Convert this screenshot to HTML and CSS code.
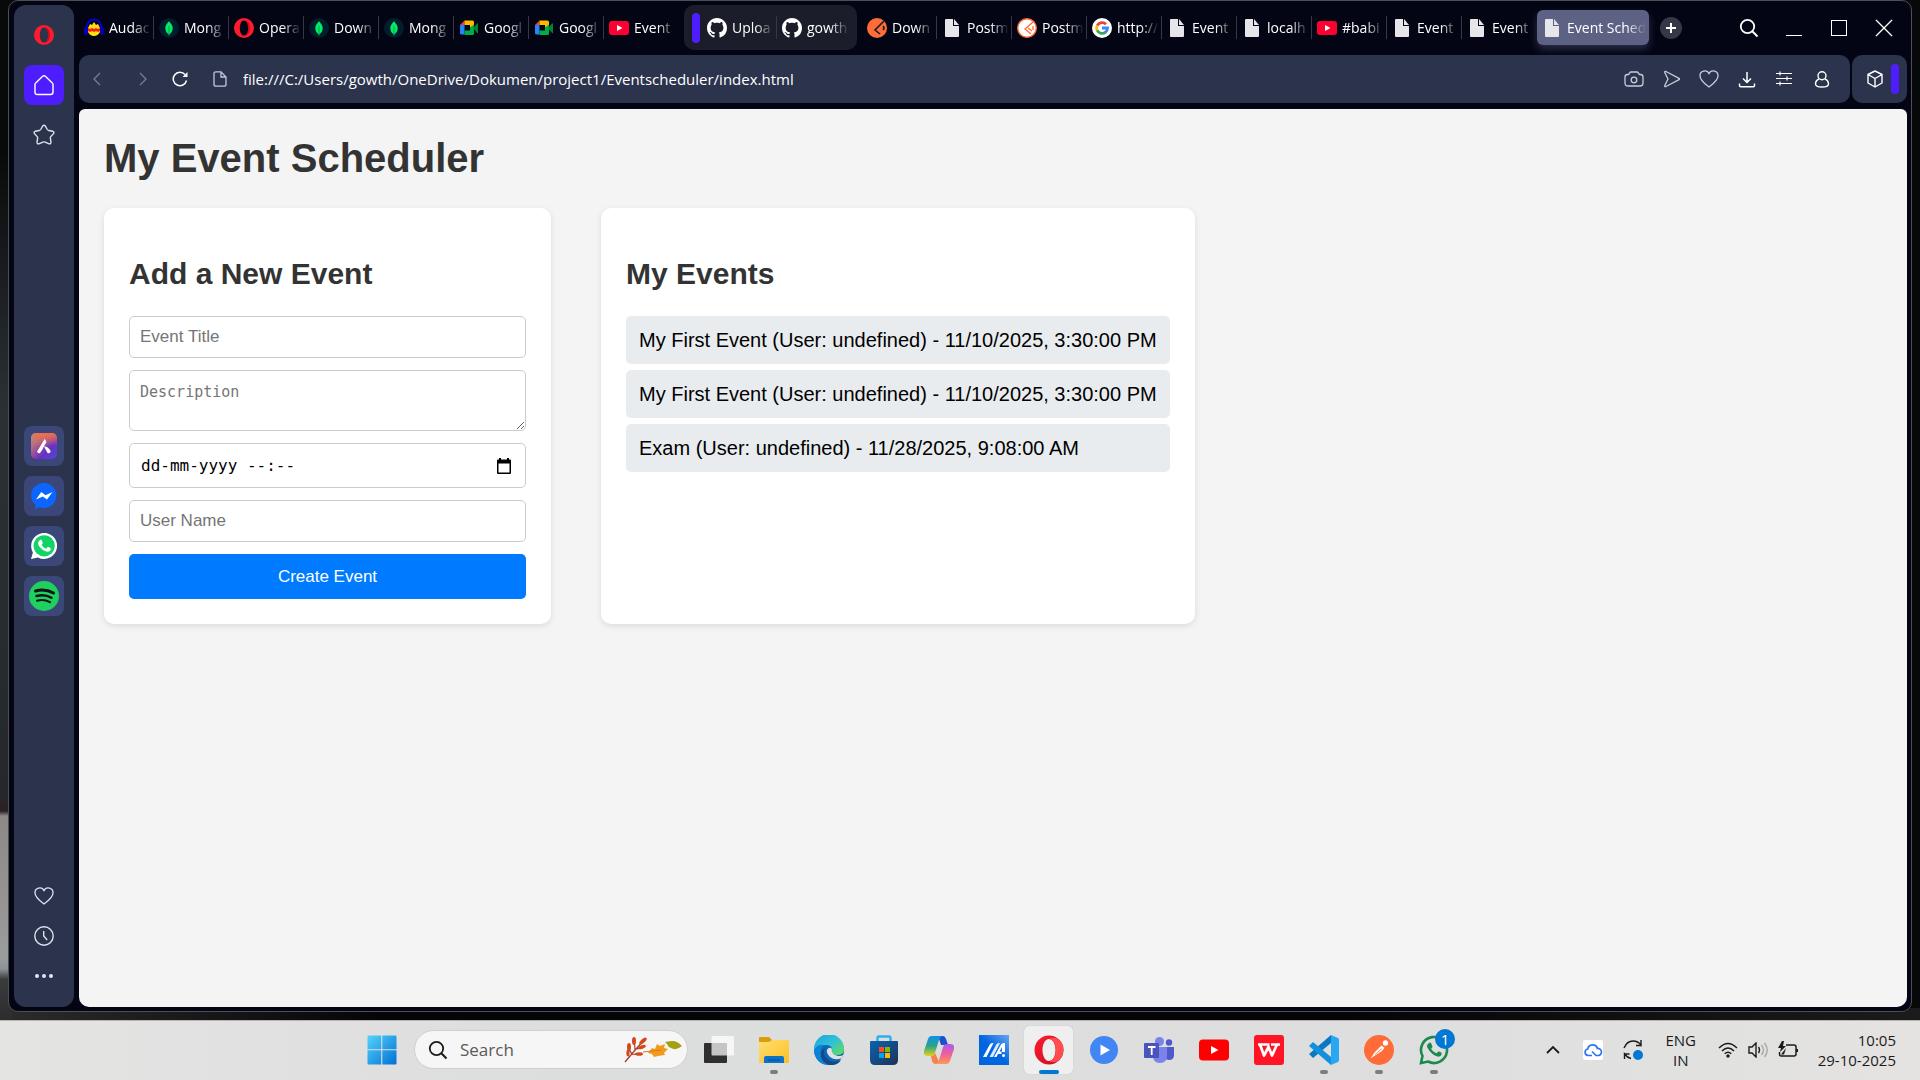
FILE: index.html
```html
<!DOCTYPE html>
<html lang="en">
<head>
<meta charset="utf-8">
<meta name="viewport" content="width=device-width, initial-scale=1">
<title>Event Scheduler</title>
<link rel="stylesheet" href="styles.css">
</head>
<body>
<svg class="defs" aria-hidden="true">
  <defs>
    <linearGradient id="gWin" x1="0" y1="0" x2="1" y2="1"><stop offset="0" stop-color="#55d3fb"/><stop offset="1" stop-color="#0070d4"/></linearGradient>
    <linearGradient id="gFolder" x1="0" y1="0" x2="1" y2="1"><stop offset="0" stop-color="#ffdf74"/><stop offset="1" stop-color="#fcbf22"/></linearGradient>
    <linearGradient id="gEdge" x1="0" y1="0" x2="1" y2="1"><stop offset="0" stop-color="#1d9fe0"/><stop offset=".5" stop-color="#2fc2d6"/><stop offset="1" stop-color="#6be04a"/></linearGradient>
    <linearGradient id="gStore" x1="0" y1="0" x2="1" y2="1"><stop offset="0" stop-color="#0a63b0"/><stop offset="1" stop-color="#1e3258"/></linearGradient>
    <linearGradient id="gCopA" x1="0" y1="0" x2="0" y2="1"><stop offset="0" stop-color="#1690e8"/><stop offset=".5" stop-color="#26a38c"/><stop offset="1" stop-color="#e8d018"/></linearGradient>
    <linearGradient id="gCopB" x1="0" y1="0" x2="0" y2="1"><stop offset="0" stop-color="#a55bf0"/><stop offset=".5" stop-color="#f0609a"/><stop offset="1" stop-color="#ff9a50"/></linearGradient>
    <linearGradient id="gAsus" x1="0" y1="1" x2="1" y2="0"><stop offset=".5" stop-color="#0066e0"/><stop offset="1" stop-color="#66a6f2"/></linearGradient>
    <linearGradient id="gOpera" x1="0" y1="0" x2="1" y2="1"><stop offset="0" stop-color="#ff1b2d"/><stop offset="1" stop-color="#c3101f"/></linearGradient>
    <linearGradient id="gAria" x1="0" y1="0" x2="1" y2="1"><stop offset="0" stop-color="#55b8dc"/><stop offset=".3" stop-color="#b5687f"/><stop offset=".65" stop-color="#6a2fc4"/><stop offset="1" stop-color="#4c49d6"/></linearGradient>
    <linearGradient id="gAriaTop" x1="0" y1="0" x2="0" y2="1"><stop offset="0" stop-color="#f07048"/><stop offset=".5" stop-color="#f07048" stop-opacity="0"/></linearGradient>
    <symbol id="opera" viewBox="0 0 20 20"><path fill-rule="evenodd" fill="#ff1b2d" d="M10 0a10 10 0 1 0 0 20a10 10 0 1 0 0-20zM10 2.400c-2.600 0-4.200 3.500-4.200 7.600s1.600 7.600 4.200 7.600s4.200-3.500 4.200-7.600s-1.600-7.600-4.200-7.600z"/><path fill="#a70014" opacity=".6" d="M10 2.400c2 0 6 1 6 7.600s-4 7.600-6 7.600c6-1.600 5.600-13.600 0-15.200z"/></symbol>
    <symbol id="mongo" viewBox="0 0 20 20"><circle cx="10" cy="10" r="10" fill="#001e2b"/><path fill="#00ed64" d="M10 3c1 2 3.700 3.800 3.700 7.300c0 3-1.600 4.800-3.300 5.900v1.300h-.8v-1.300c-1.700-1.100-3.300-2.900-3.300-5.900C6.300 6.800 9 5 10 3z"/><path d="M10 8v8" stroke="#00a54a"/></symbol>
    <symbol id="meet" viewBox="0 0 20 20"><path fill="#2684fc" d="M1 7h4.500v9.500H2.500A1.500 1.500 0 0 1 1 15z"/><path fill="#ea4335" d="M1 7l4.500-4.500V7z"/><path fill="#ffba00" d="M5.500 2.500h8A1.500 1.500 0 0 1 15 4v4l-4 2V7H5.500z"/><path fill="#00ac47" d="M5.500 17v-4.500H11V9.500l4-3v9a1.500 1.500 0 0 1-1.500 1.500z"/><path fill="#00832d" d="M14 10l4-4.500q1-.7 1 .5v8.500q0 1.200-1 .5z"/></symbol>
    <symbol id="youtube" viewBox="0 0 20 20"><rect y="3" width="20" height="14" rx="3" fill="#ff0033"/><path d="M8 7l5.500 3L8 13z" fill="#fff"/></symbol>
    <symbol id="github" viewBox="0 0 16 16"><path fill="#fff" d="M8 0C3.580 0 0 3.580 0 8c0 3.540 2.290 6.530 5.470 7.590.4.070.55-.17.55-.38 0-.19-.01-.82-.01-1.490-2.010.37-2.530-.49-2.690-.94-.09-.23-.48-.94-.82-1.130-.28-.15-.68-.52-.01-.53.630-.01 1.080.58 1.230.82.720 1.210 1.870.87 2.330.66.070-.52.280-.87.510-1.070-1.780-.2-3.640-.89-3.640-3.950 0-.87.310-1.590.820-2.150-.08-.2-.36-1.020.08-2.120 0 0 .67-.21 2.200.82.640-.18 1.320-.27 2-.27s1.360.09 2 .27c1.530-1.040 2.200-.82 2.200-.82.440 1.100.160 1.920.080 2.120.510.560.820 1.270.820 2.150 0 3.070-1.870 3.750-3.650 3.950.290.250.540.730.540 1.480 0 1.070-.01 1.930-.01 2.200 0 .210.150.460.550.380A8.010 8.010 0 0 0 16 8c0-4.420-3.580-8-8-8z"/></symbol>
    <symbol id="page" viewBox="0 0 20 20"><path fill="#e6e6ea" d="M4 1h7v7h6v10a1 1 0 0 1-1 1H4a1 1 0 0 1-1-1V2a1 1 0 0 1 1-1z"/><path fill="#e6e6ea" d="M12 1l5 6h-5z"/></symbol>
    <symbol id="heart" viewBox="0 0 20 20"><path fill="none" stroke="currentColor" stroke-width="1.300" stroke-linejoin="round" d="M10 18C6 15 1 11.500 1 7a4.700 4.700 0 0 1 9-2.200A4.700 4.700 0 0 1 19 7c0 4.500-5 8-9 11z"/></symbol>
    <symbol id="glass" viewBox="0 0 20 20"><circle cx="8.500" cy="8.500" r="6.700" fill="none" stroke="currentColor" stroke-width="1.800"/><path d="M13.300 13.300L18.500 18.500" stroke="currentColor" stroke-width="2"/></symbol>
  </defs>
</svg>

<div class="desktop">
  <div class="window">
    <aside class="sidebar">
      <div class="side-group">
        <button class="side-btn" aria-label="Opera menu"><svg width="20" height="20"><use href="#opera"/></svg></button>
        <button class="side-btn side-home" aria-label="Home"><svg width="22" height="22" viewBox="0 0 22 22"><path fill="none" stroke="#fff" stroke-width="1.400" stroke-linejoin="round" d="M2 10.500Q2 9.500 3 8.700L9.600 2.300Q11 1 12.400 2.300L19 8.700Q20 9.500 20 10.500V18q0 2.500-2.500 2.500h-13Q2 20.500 2 18z"/></svg></button>
        <button class="side-btn" aria-label="Pinboards"><svg width="22" height="22" viewBox="0 0 22 22"><path fill="none" stroke="currentColor" stroke-width="1.400" stroke-linejoin="round" d="M9.700 2q1.300-1.500 2.600 0l2 3.500q.5.800 1.500 1l4 .8q1.800.7.700 2.300l-2.700 3q-.6.800-.4 1.700l.6 4q-.1 1.900-1.900 1.500l-4-1.700q-1.100-.4-2.200 0l-4 1.700Q4.100 20.200 4 18.300l.6-4q.2-.9-.4-1.700l-2.700-3Q.4 8 2.200 7.300l4-.8q1-.2 1.500-1z"/></svg></button>
      </div>
      <div class="side-group side-apps">
        <button class="side-btn side-app" aria-label="Aria"><svg width="26" height="26" viewBox="0 0 26 26"><rect width="26" height="26" rx="5" fill="url(#gAria)"/><rect width="26" height="26" rx="5" fill="url(#gAriaTop)"/><path d="M13.800 6L12.600 13Q11.500 17 9 19.500Q7.500 21 6.300 18.500Z" fill="#fff"/><path d="M13.800 6L6.300 18.500Q7 21 9 20L15.500 9Z" fill="#fff"/><path d="M13 13.500q4-.5 6.800 5q-1 2.500-3.300 1.500Z" fill="#fff"/></svg></button>
        <button class="side-btn side-app" aria-label="Messenger"><svg width="26" height="26" viewBox="0 0 26 26"><path fill="#0a66ff" d="M13 0a12.500 12.500 0 1 1-4.500 24.200L4.500 26V22A12.500 12.500 0 0 1 13 0z"/><path fill="#fff" d="M5 16.500L10.300 9l4.200 3.200L21.500 9 16 16.500l-4.200-3z"/></svg></button>
        <button class="side-btn side-app" aria-label="WhatsApp"><svg width="26" height="26" viewBox="0 0 26 26"><path fill="#fff" d="M0 26l1.900-6.500A13 13 0 1 1 7 24.400z"/><circle cx="13.200" cy="12.800" r="10.600" fill="#12d366"/><path fill="#fff" d="M9 7q1-1 1.700.2l1.100 2.500q.1.600-1.200 2q1.500 2.800 4.300 4 .500.200 1.800-1.600.500-.4 3 1.100.500 3-2.700 3.500C12.500 18.500 7.500 14 7 10.500Q7 8.300 9 7z"/></svg></button>
        <button class="side-btn side-app" aria-label="Spotify"><svg width="30" height="30" viewBox="0 0 30 30"><circle cx="15" cy="15" r="15" fill="#1fcf60"/><g fill="none" stroke="#101410" stroke-linecap="round"><path d="M6.500 10q9.500-2.500 18 2" stroke-width="3"/><path d="M7.500 15q8-2.200 15 1.700" stroke-width="2.400"/><path d="M8 19.700q7-1.800 13 1.500" stroke-width="2"/></g></svg></button>
      </div>
      <div class="side-group side-tools">
        <button class="side-btn" aria-label="Favourites"><svg width="20" height="20"><use href="#heart"/></svg></button>
        <button class="side-btn" aria-label="History"><svg width="20" height="20" viewBox="0 0 20 20"><g fill="none" stroke="currentColor" stroke-width="1.400"><circle cx="10" cy="10" r="9.200"/><path d="M9.700 5v5l3.500 4"/></g></svg></button>
        <button class="side-btn" aria-label="More"><svg width="18" height="4" viewBox="0 0 18 4"><g fill="#e4e7f2"><circle cx="2" cy="2" r="2"/><circle cx="9" cy="2" r="2"/><circle cx="16" cy="2" r="2"/></g></svg></button>
      </div>
    </aside>

    <div class="browser">
      <header class="tab-bar">
        <nav class="tabs" aria-label="Tabs">
          <a class="tab" href="#"><svg class="fav" viewBox="0 0 20 20"><path fill="none" stroke="#0000d8" stroke-width="2" d="M3 12C2 5 6 1.500 10 1.500S18 5 17 12"/><rect y="9" width="4" height="8" rx="2" fill="#0000b0"/><rect x="16" y="9" width="4" height="8" rx="2" fill="#0000b0"/><path fill="#ffdd10" d="M4 10l2-4 2 1 2-3 2 3 2-1 2 4v4q-2 4-6 4t-6-4z"/><path fill="#f02010" d="M4 10l2 1 2-1 2 1 2-1 2 1 2-1v3l-2 1-2-1-2 1-2-1-2 1-2-1z"/></svg><span class="tab-label">Audac</span></a>
          <a class="tab" href="#"><svg class="fav"><use href="#mongo"/></svg><span class="tab-label">Mong</span></a>
          <a class="tab" href="#"><svg class="fav"><use href="#opera"/></svg><span class="tab-label">Opera</span></a>
          <a class="tab" href="#"><svg class="fav"><use href="#mongo"/></svg><span class="tab-label">Down</span></a>
          <a class="tab" href="#"><svg class="fav"><use href="#mongo"/></svg><span class="tab-label">Mong</span></a>
          <a class="tab" href="#"><svg class="fav"><use href="#meet"/></svg><span class="tab-label">Googl</span></a>
          <a class="tab" href="#"><svg class="fav"><use href="#meet"/></svg><span class="tab-label">Googl</span></a>
          <a class="tab tab-last" href="#"><svg class="fav"><use href="#youtube"/></svg><span class="tab-label">Event</span></a>
          <div class="tab-island">
            <span class="island-mark"></span>
            <a class="tab" href="#"><svg class="fav"><use href="#github"/></svg><span class="tab-label">Uploa</span></a>
            <a class="tab tab-last" href="#"><svg class="fav"><use href="#github"/></svg><span class="tab-label">gowth</span></a>
          </div>
          <a class="tab" href="#"><svg class="fav" viewBox="0 0 20 20"><circle cx="10" cy="10" r="10" fill="#ff6c37"/><path d="M17 3L8 12l5 4M11 9l-3 3M16 8q2 2 0 4" fill="none" stroke="#1b1b22" stroke-width="1.600"/></svg><span class="tab-label">Down</span></a>
          <a class="tab" href="#"><svg class="fav"><use href="#page"/></svg><span class="tab-label">Postm</span></a>
          <a class="tab" href="#"><svg class="fav" viewBox="0 0 20 20"><circle cx="10" cy="10" r="9.300" fill="#fff" stroke="#ff6c37" stroke-width="1.400"/><path d="M16 4L8 11l6 5M11 10l4 3M16 8v4" fill="none" stroke="#ff6c37" stroke-width="1.300"/></svg><span class="tab-label">Postm</span></a>
          <a class="tab" href="#"><svg class="fav" viewBox="0 0 20 20"><circle cx="10" cy="10" r="10" fill="#fff"/><g fill="none" stroke-width="2.800"><path stroke="#ea4335" d="M5.200 7.600A5.500 5.500 0 0 1 14 6.200"/><path stroke="#fbbc05" d="M5.200 12.600A5.500 5.500 0 0 1 5.200 7.400"/><path stroke="#34a853" d="M13.600 14.200A5.500 5.500 0 0 1 5.200 12.400"/><path stroke="#4285f4" d="M10 10h5.500Q15.500 12.700 13.500 14.300"/></g></svg><span class="tab-label">http://</span></a>
          <a class="tab" href="#"><svg class="fav"><use href="#page"/></svg><span class="tab-label">Event</span></a>
          <a class="tab" href="#"><svg class="fav"><use href="#page"/></svg><span class="tab-label">localh</span></a>
          <a class="tab" href="#"><svg class="fav"><use href="#youtube"/></svg><span class="tab-label">#babi</span></a>
          <a class="tab" href="#"><svg class="fav"><use href="#page"/></svg><span class="tab-label">Event</span></a>
          <a class="tab tab-last" href="#"><svg class="fav"><use href="#page"/></svg><span class="tab-label">Event</span></a>
          <a class="tab tab-active" href="#" aria-current="page"><svg class="fav"><use href="#page"/></svg><span class="tab-label">Event Sched</span></a>
        </nav>
        <button class="new-tab" aria-label="New tab"><svg width="10" height="10" viewBox="0 0 10 10"><path d="M5 0v10M0 5h10" stroke="#fff" stroke-width="2"/></svg></button>
        <div class="win-controls">
          <button aria-label="Search tabs"><svg width="20" height="20"><use href="#glass"/></svg></button>
          <button aria-label="Minimize"><svg width="16" height="16" viewBox="0 0 16 16"><path d="M0 15.500h16" stroke="#fff"/></svg></button>
          <button aria-label="Maximize"><svg width="16" height="16" viewBox="0 0 16 16"><rect x=".5" y=".5" width="15" height="15" fill="none" stroke="#fff"/></svg></button>
          <button aria-label="Close"><svg width="18" height="18" viewBox="0 0 18 18"><path d="M1 1l16 16M17 1L1 17" stroke="#fff" stroke-width="1.300"/></svg></button>
        </div>
      </header>

      <div class="toolbar">
        <div class="address-bar">
          <button class="nav-btn nav-off" aria-label="Back"><svg width="8" height="14" viewBox="0 0 8 14"><path d="M7 1L1 7l6 6" fill="none" stroke="currentColor" stroke-width="1.300"/></svg></button>
          <button class="nav-btn nav-off" aria-label="Forward"><svg width="8" height="14" viewBox="0 0 8 14"><path d="M1 1l6 6-6 6" fill="none" stroke="currentColor" stroke-width="1.300"/></svg></button>
          <button class="nav-reload" aria-label="Reload"><svg width="16" height="16" viewBox="0 0 16 16"><path d="M14.500 9.500A6.700 6.700 0 1 1 13 3.500" fill="none" stroke="#fff" stroke-width="1.500"/><path d="M15.500 1v5h-5z" fill="#fff"/></svg></button>
          <svg class="page-info" width="14" height="16" viewBox="0 0 14 16"><path d="M8 .8H3Q1 .8 1 2.800v10.400q0 2 2 2h8q2 0 2-2V6zM8 .8V6h5" fill="none" stroke="#c3c7d6" stroke-width="1.300"/></svg>
          <input class="url" type="text" aria-label="Address" value="file:///C:/Users/gowth/OneDrive/Dokumen/project1/Eventscheduler/index.html">
          <div class="actions">
            <button aria-label="Snapshot"><svg width="20" height="20" viewBox="0 0 20 20"><g fill="none" stroke="currentColor" stroke-width="1.300" stroke-linejoin="round"><path d="M1 8q0-2.500 2.500-2.500h1L6.500 3h7l2 2.500h1Q19 5.500 19 8v6q0 3-3 3H4q-3 0-3-3z"/><circle cx="10" cy="11" r="2.800"/></g></svg></button>
            <button aria-label="Send"><svg width="18" height="18" viewBox="0 0 18 18"><path d="M2 3q-1-2 1-1.500l13 6.800q1 .7 0 1.400L3 16.500q-2 .5-1-1.500l3-6z" fill="none" stroke="currentColor" stroke-width="1.300"/></svg></button>
            <button aria-label="Favourite"><svg width="20" height="20"><use href="#heart"/></svg></button>
            <button class="bright" aria-label="Downloads"><svg width="18" height="18" viewBox="0 0 18 18"><path d="M9 2v10M5 8.500l4 4 4-4M1.500 13.500v2q0 1.200 1.200 1.200h12.600q1.200 0 1.200-1.200v-2" fill="none" stroke="currentColor" stroke-width="1.500"/></svg></button>
            <button class="bright" aria-label="Easy setup"><svg width="16" height="16" viewBox="0 0 16 16"><path d="M0 2.500h16M0 7.500h16M0 12.500h16M4 .5v4M11 5.500v4M4 10.500v4" stroke="currentColor" stroke-width="1.200"/></svg></button>
            <button class="bright" aria-label="Profile"><svg width="16" height="18" viewBox="0 0 16 18"><g fill="none" stroke="currentColor" stroke-width="1.400"><circle cx="8" cy="5.800" r="4"/><path d="M5 9Q1.500 10.500 1.500 14q0 3 6.500 3t6.500-3Q14.500 10.500 11 9"/></g></svg></button>
          </div>
        </div>
        <div class="panel-box">
          <button aria-label="Extensions"><svg width="18" height="18" viewBox="0 0 18 18"><path d="M9 1l7 3.500v8.500L9 17l-7-4V4.500zM2 4.500L9 8.500l7-4M9 8.500V17" fill="none" stroke="#fff" stroke-width="1.400" stroke-linejoin="round"/></svg></button>
          <span class="panel-mark"></span>
        </div>
      </div>

      <main class="page">
        <h1>My Event Scheduler</h1>
        <div class="cards">
          <section class="card card-form">
            <h2>Add a New Event</h2>
            <form class="event-form">
              <input class="field" type="text" aria-label="Event Title" placeholder="Event Title">
              <textarea class="field field-area" aria-label="Description" placeholder="Description"></textarea>
              <div class="field field-date">
                <input type="text" aria-label="Date and time" placeholder="dd-mm-yyyy --:--">
                <button type="button" aria-label="Show date picker"><svg width="14" height="16" viewBox="0 0 14 16"><path fill="#000" d="M2 0h2v1.500h6V0h2v1.500h1q1 0 1 1V15q0 1-1 1H1q-1 0-1-1V2.500q0-1 1-1h1z"/><path fill="#fff" d="M1.500 5.500h11v9h-11z"/></svg></button>
              </div>
              <input class="field" type="text" aria-label="User Name" placeholder="User Name">
              <button class="submit" type="submit">Create Event</button>
            </form>
          </section>
          <section class="card">
            <h2>My Events</h2>
            <ul class="events">
              <li>My First Event (User: undefined) - 11/10/2025, 3:30:00 PM</li>
              <li>My First Event (User: undefined) - 11/10/2025, 3:30:00 PM</li>
              <li>Exam (User: undefined) - 11/28/2025, 9:08:00 AM</li>
            </ul>
          </section>
        </div>
      </main>
    </div>
  </div>
</div>

<footer class="taskbar">
  <div class="apps">
    <button class="app" aria-label="Start"><svg width="30" height="30" viewBox="0 0 30 30"><path fill="url(#gWin)" d="M1.500.500h12.700v13.700H.500V1.500q0-1 1-1zM15.300.500h13.200q1 0 1 1v12.700H15.300zM.500 15.300h13.700v14.200H1.500q-1 0-1-1zM15.300 15.300h14.200v13.200q0 1-1 1H15.300z"/></svg></button>
    <label class="search">
      <svg width="20" height="20"><use href="#glass"/></svg>
      <input type="text" placeholder="Search" aria-label="Search">
      <svg width="58" height="26" viewBox="0 0 58 26"><path d="M1 25Q10 14 21 2M8 17Q4 12 5 7M11 13q0-5-1-8M8 17q5 1 10-1M12 12q4 0 8-3" stroke="#a33a1c" stroke-width="1.200" fill="none"/><g fill="#d4481c"><ellipse cx="5" cy="10" rx="2" ry="4"/><ellipse cx="10" cy="4" rx="2" ry="4"/><ellipse cx="19" cy="4" rx="2" ry="4.500" transform="rotate(50 19 4)"/><ellipse cx="18" cy="10" rx="4" ry="1.800" transform="rotate(-20 18 10)"/><ellipse cx="15" cy="17" rx="4" ry="1.800"/><ellipse cx="4" cy="16" rx="1.600" ry="3.500"/></g><path fill="#f39a1e" d="M24 16l4-5 3 1 2-5 3 2 5-2-1 4 4 1-4 4 1 2-7 1-4 1-2-3z"/><path d="M19 15l18-2" stroke="#d97a12"/><path fill="#a3a012" d="M41 5q5-1 8-1 4 0 9 5-6 5-11 2-3-1-4-4z"/></svg>
    </label>
    <button class="app" aria-label="Task view"><svg width="30" height="30" viewBox="0 0 30 30"><rect y="8" width="23" height="20" rx="1" fill="#2f2f2f"/><rect x="7.500" y="1" width="22.500" height="19.500" rx="1" fill="#fff" fill-opacity=".72"/></svg></button>
    <button class="app app-open" aria-label="File Explorer"><svg width="30" height="30" viewBox="0 0 30 30"><path fill="#dd9d08" d="M0 3q0-1 1-1h9l3 3h7v4H0z"/><path fill="url(#gFolder)" d="M0 7h10l3-2h16q1 0 1 1v21q0 1-1 1H1q-1 0-1-1z"/><path fill="#0a72c8" d="M5 28v-5q0-2 2-2h16q2 0 2 2v5z"/><path d="M9 25h12" stroke="#0a4a86"/></svg></button>
    <button class="app" aria-label="Edge"><svg width="30" height="30" viewBox="0 0 30 30"><circle cx="15" cy="15" r="15" fill="#0c67b8"/><path fill="url(#gEdge)" d="M0 14A15 15 0 0 1 30 14q0 6-7 6-6 0-5-4 1-5-5-6Q3 9 0 17z"/><path fill="#0a84d8" d="M0 15Q3 9 10 10q-5 4-3 11 3 6 9 8.900Q2 31 0 15z"/><path fill="#134a86" d="M11 13q-3 6 2 11 6 5 14 1-4 6-12 5Q6 27 7 18q1-4 4-5z"/><path fill="#dfe2e3" d="M13 15q2-4 5-1-1 4 3 6 5 2 8 0l-1 3q-7 3-12-1-4-4-3-7z"/></svg></button>
    <button class="app" aria-label="Microsoft Store"><svg width="30" height="30" viewBox="0 0 30 30"><path d="M8.500 7V3q0-1.500 1.500-1.500h10q1.500 0 1.500 1.500v4" fill="none" stroke="#29b3ee" stroke-width="2.400"/><path fill="url(#gStore)" d="M2 6h26q1 0 1 1v18q0 5-5 5H6q-5 0-5-5V7q0-1 1-1z"/><path fill="#f25022" d="M10 12h5v5h-5z"/><path fill="#7fba00" d="M16 12h5v5h-5z"/><path fill="#00a4ef" d="M10 18h5v5h-5z"/><path fill="#ffb900" d="M16 18h5v5h-5z"/></svg></button>
    <button class="app" aria-label="Copilot"><svg width="30" height="30" viewBox="0 0 30 30"><path fill="#1c50d0" d="M14 1h5q2 0 3 3l2 6h-7z"/><path fill="url(#gCopA)" d="M8 1h10q-2 1-3 4l-4 13q-1 3-4 3H4q-5 0-4-5L4 4Q5 1 8 1z"/><path fill="#f4834a" d="M16 29h-4q-3 0-4-3l-1-5q3 0 4-3z"/><path fill="url(#gCopB)" d="M22 29H11q3-1 4-4l4-13q1-3 4-3h3q5 0 4 5l-4 12q-1 3-4 3z"/></svg></button>
    <button class="app" aria-label="MyASUS"><svg width="30" height="30" viewBox="0 0 30 30"><path fill="url(#gAsus)" d="M0 0h30v30H0z"/><g fill="#fff"><path d="M4 22L10.500 10Q11.500 8 13.500 8h1L7.500 22z"/><path fill-opacity=".85" d="M10.500 22L17 10Q18 8 20 8h1L14 22z"/><path d="M15 22L22 9.500Q23 8 24.500 8H26v9h-3v-5l-2.500 4.500h2V19h-3.500L17.500 22z"/><circle cx="24.500" cy="20.500" r="1.500"/></g></svg></button>
    <button class="app app-current" aria-label="Opera"><svg width="30" height="30" viewBox="0 0 30 30"><path fill="url(#gOpera)" fill-rule="evenodd" d="M15 .5a14.500 14.500 0 1 0 0 29a14.500 14.500 0 1 0 0-29zM15 4c4 0 6.500 5 6.500 11S19 26 15 26s-6.500-5-6.500-11S11 4 15 4z"/><path fill="#ff4d50" d="M15 4q5-3 10 1 5 4 4.500 10T25 25q-5 4-10 1 6 0 7-11-1-11-7-11z"/></svg></button>
    <button class="app" aria-label="Media player"><svg width="28" height="28" viewBox="0 0 28 28"><circle cx="14" cy="14" r="14" fill="#4285f4"/><path d="M10.500 8.500L20 14l-9.500 5.500z" fill="#fff"/></svg></button>
    <button class="app" aria-label="Teams"><svg width="30" height="30" viewBox="0 0 30 30"><circle cx="15.500" cy="6.500" r="4.500" fill="#7b83eb"/><circle cx="25" cy="7.500" r="3.200" fill="#5059c9"/><path fill="#5059c9" d="M21 12h9v8q0 5-5 5-4 0-4-4z"/><path fill="#7b83eb" d="M9 12h14v9q0 7-7 7t-7-7z"/><rect y="8" width="15" height="15" rx="1" fill="#4b53bc"/><path d="M4 12h7.500M7.700 12v8" stroke="#fff" stroke-width="1.800"/></svg></button>
    <button class="app" aria-label="YouTube"><svg width="30" height="22" viewBox="0 0 30 22"><rect width="30" height="21" y=".5" rx="4" fill="#f00"/><path d="M12 7l7.500 4-7.500 4z" fill="#fff"/></svg></button>
    <button class="app" aria-label="WPS Office"><svg width="30" height="30" viewBox="0 0 30 30"><rect width="30" height="30" rx="3" fill="#ff1525"/><path d="M4 9.500h11.500M6 9.500l4 11 4.500-8.500 3.500 8.500 5-11M17 9.500h9" fill="none" stroke="#fff" stroke-width="2.700" stroke-linejoin="round"/></svg></button>
    <button class="app app-open" aria-label="Visual Studio Code"><svg width="30" height="30" viewBox="0 0 30 30"><path fill="#0a78c4" d="M22 0v8L4 23l-4-4z"/><path fill="#1290dc" d="M4 7l18 15v8L0 11z"/><path fill="#28a8f2" d="M22 0l7 3q1 .5 1 2v20q0 1.500-1 2l-7 3z"/></svg></button>
    <button class="app app-open" aria-label="Postman"><svg width="30" height="30" viewBox="0 0 30 30"><circle cx="15" cy="15" r="15" fill="#ff6c37"/><circle cx="21.500" cy="8" r="2.700" fill="#fff"/><path d="M6.500 23.500l4-6L17.500 10.500l3 2.200-2.500 3.300-7 4.500z" fill="#fff"/><path d="M11 19.500l7-6" stroke="#ff6c37" stroke-width=".8"/></svg></button>
    <button class="app app-open" aria-label="WhatsApp"><svg width="30" height="30" viewBox="0 0 30 30"><path fill="none" stroke="#1c8a50" stroke-width="2.600" d="M2 28l1.500-7A13 13 0 1 1 9 26.500z"/><path fill="#1c8a50" d="M10 8q1.500-1 2.200.4l1.300 3q.1.800-1.400 2.300 1.700 3.200 5 4.600.7.200 2.100-1.800.7-.5 3.400 1.200.5 3.500-3.200 4-6.400-.7-11.400-9.700Q7.500 9.500 10 8z"/></svg><span class="badge">1</span></button>
  </div>
  <div class="tray">
    <button class="tray-btn" aria-label="Show hidden icons"><svg width="14" height="10" viewBox="0 0 14 10"><path d="M1 8l6-6 6 6" fill="none" stroke="#1b1b1b" stroke-width="1.800"/></svg></button>
    <button class="tray-btn" aria-label="Cloud drive"><svg width="20" height="20" viewBox="0 0 20 20"><rect width="20" height="20" rx="2" fill="#fff"/><path d="M9 15.500H5a3.300 3.300 0 0 1-.3-6.500 5 5 0 0 1 9.700-.5 3.500 3.500 0 0 1 1 7H13l-4-4" fill="none" stroke="#2f74ee" stroke-width="1.700"/></svg></button>
    <button class="tray-btn" aria-label="Update"><svg width="22" height="22" viewBox="0 0 22 22"><path d="M2 9Q5 2 11 2q5 0 8 4V1M19 6.500h-5M9 19.500q-4-1-6.500-4.500v5M2.500 15h5" fill="none" stroke="#1b1b1b" stroke-width="1.400"/><circle cx="16" cy="16" r="5" fill="#0078d4"/></svg></button>
    <span class="lang"><span>ENG</span><span>IN</span></span>
    <div class="status">
      <svg width="20" height="16" viewBox="0 0 20 16"><g fill="none" stroke="#1b1b1b" stroke-width="1.400"><path d="M1 6q9-9 18 0M4 9q6-6 12 0M6.700 11.800q3.300-3 6.600 0"/></g><circle cx="10" cy="14" r="1.700" fill="#1b1b1b"/></svg>
      <svg width="20" height="16" viewBox="0 0 20 16"><g fill="none" stroke-width="1.400"><path stroke="#1b1b1b" d="M1 5h3l4-4v14l-4-4H1zM10.500 5q2 3 0 6"/><path stroke="#a9a9a9" d="M13.500 3q4 5 0 10M16.500 1q5.500 7 0 14"/></g></svg>
      <svg width="20" height="17" viewBox="0 0 20 17"><path d="M8 4h8q2 0 2 2v7q0 2-2 2H3q-1.500 0-1.500-2v-2" fill="none" stroke="#1b1b1b" stroke-width="1.500"/><path d="M18 8h2v3h-2zM4 0L0 7h3L2 11 8 5H5l1-5zM3 13.500h3L8 7z" fill="#1b1b1b"/></svg>
    </div>
    <span class="clock"><span>10:05</span><span>29-10-2025</span></span>
  </div>
</footer>
</body>
</html>
```
FILE: styles.css
```css
* { box-sizing: border-box; }

body {
  margin: 0;
  min-height: 100vh;
  display: flex;
  flex-direction: column;
  font-family: "Open Sans", "Noto Sans", sans-serif;
  background: #050608;
}

button {
  border: 0;
  padding: 0;
  margin: 0;
  background: none;
  color: inherit;
  font: inherit;
  display: flex;
  align-items: center;
  justify-content: center;
}

a { color: inherit; text-decoration: none; }
svg { display: block; flex: none; }
.defs { position: absolute; width: 0; height: 0; }

/* Desktop and browser window */
.desktop {
  flex: 1;
  display: flex;
  padding: 0 8px 8px;
  background:
    linear-gradient(#08090b 0 15%, #171a1c 25%, #2a3134 40%, #24282b 78%, #2b2022 79.500%, #8c8987 80%, #9b9c9c 94%, #8b9299 95%, #3a3b3d 96%, #2c2c2c) left / 12px 100% no-repeat,
    linear-gradient(90deg, #2c2c2c, #050505 20%, #050505 70%, #1b1b1b) bottom / 100% 12px no-repeat,
    #070809;
}

.window {
  flex: 1;
  min-width: 0;
  display: flex;
  gap: 5px;
  padding: 4px 4px 4px 5px;
  border: 1px solid #4d4f55;
  border-radius: 10px;
  background: #030514;
}

/* Sidebar */
.sidebar {
  flex: none;
  width: 60px;
  display: flex;
  flex-direction: column;
  justify-content: space-between;
  padding: 10px 10px 11px;
  border-radius: 12px;
  background: #2c334d;
  color: #dfe2ee;
}

.side-group { display: flex; flex-direction: column; gap: 10px; }
.side-apps { padding-top: 11px; }
.side-tools { gap: 0; }
.side-btn { width: 40px; height: 40px; border-radius: 8px; }
.side-home { background: #4e1dff; }
.side-app { background: #3b4778; }

/* Tab bar */
.browser { flex: 1; min-width: 0; display: flex; flex-direction: column; }

.tab-bar {
  display: flex;
  align-items: center;
  height: 50px;
  padding-bottom: 5px;
  color: #fff;
}

.tabs { display: flex; align-items: center; min-width: 0; }

.tab {
  position: relative;
  flex: none;
  display: flex;
  align-items: center;
  gap: 5px;
  width: 75px;
  height: 35px;
  padding: 0 3px 0 5px;
  font-size: 14px;
  line-height: 20px;
}

.tab::after {
  content: "";
  position: absolute;
  right: 0;
  top: 6px;
  width: 1px;
  height: 23px;
  background: #363845;
}

.tab-last::after, .tab-active::after { content: none; }
.fav { width: 20px; height: 20px; }

.tab-label {
  flex: 1;
  min-width: 0;
  overflow: hidden;
  white-space: nowrap;
  -webkit-mask-image: linear-gradient(90deg, #000 55%, transparent);
  mask-image: linear-gradient(90deg, #000 55%, transparent);
}

.tab-island {
  flex: none;
  display: flex;
  align-items: center;
  height: 45px;
  margin: 0 5px;
  padding: 0 5px 0 8px;
  border-radius: 10px;
  background: #1b1d2b;
}

.island-mark { width: 8px; height: 30px; margin-right: 2px; border-radius: 4px; background: #4e1dff; }

.tab-active {
  width: 112px;
  border-radius: 6px;
  background: #5d6284;
  box-shadow: 0 4px 8px rgba(140, 145, 190, .3);
}

.tab-active .tab-label {
  -webkit-mask-image: linear-gradient(90deg, #000 75%, transparent);
  mask-image: linear-gradient(90deg, #000 75%, transparent);
}

.new-tab { flex: none; width: 22px; height: 22px; margin-left: 11px; border-radius: 50%; background: #363945; }
.win-controls { flex: none; display: flex; margin: 0 1px 0 auto; }
.win-controls button { width: 45px; height: 35px; }

/* Address bar */
.toolbar { display: flex; gap: 2px; height: 48px; margin-bottom: 6px; }

.address-bar, .panel-box {
  display: flex;
  align-items: center;
  border-radius: 10px;
  background: #2c334d;
  color: #fff;
}

.address-bar { flex: 1; min-width: 0; padding: 0 18px 0 0; }
.nav-btn { flex: none; width: 46px; height: 30px; padding-right: 10px; }
.nav-off { color: #777d94; }
.nav-reload { flex: none; width: 18px; height: 30px; }
.page-info { margin: 0 16px 0 24px; }

.url {
  flex: 1;
  min-width: 0;
  border: 0;
  padding: 0;
  background: none;
  color: #fff;
  font: 15px/20px "Open Sans", "Noto Sans", sans-serif;
}

.actions { display: flex; justify-content: space-between; width: 208px; color: #c8ccd9; }
.actions button { width: 20px; height: 20px; }
.actions .bright { color: #fff; }
.panel-box { width: 55px; justify-content: space-between; padding: 0 8px 0 14px; }
.panel-mark { width: 8px; height: 30px; border-radius: 4px; background: #4e1dff; }

/* Event scheduler page */
.page {
  flex: 1;
  padding: 25px;
  border-radius: 6px 6px 10px 10px;
  background: #f4f4f4;
  font-family: "Liberation Sans", Arial, sans-serif;
}

h1 { margin: 0 0 26px; color: #333; font-size: 40px; line-height: 48px; }
h2 { margin: 25px 0 26px; color: #333; font-size: 30px; line-height: 32px; }
.cards { display: flex; gap: 50px; }

.card {
  padding: 25px;
  border-radius: 10px;
  background: #fff;
  box-shadow: 0 2px 6px rgba(0, 0, 0, .1);
}

.card-form { flex: 0 1 447px; }
.event-form { display: flex; flex-direction: column; gap: 12px; }

.field {
  display: block;
  width: 100%;
  height: 42px;
  padding: 10px;
  border: 1px solid #ccc;
  border-radius: 5px;
  background: #fff;
  font: 17px/20px "Liberation Sans", Arial, sans-serif;
}

.field::placeholder { color: #757575; }
.field-area { height: 61px; font: 15px/22px "DejaVu Sans Mono", monospace; }
.field-date { display: flex; align-items: center; height: 45px; padding: 0 14px 0 11px; }

.field-date input {
  flex: 1;
  min-width: 0;
  border: 0;
  padding: 0;
  background: none;
  font: 16px/20px "DejaVu Sans Mono", monospace;
}

.field-date input::placeholder { color: #000; }

.submit {
  height: 45px;
  border-radius: 5px;
  background: #007bff;
  color: #fff;
  font-size: 17px;
}

.events { display: flex; flex-direction: column; gap: 6px; margin: 0; padding: 0; list-style: none; }
.events li { padding: 12px 13px; border-radius: 5px; background: #e9ecef; font-size: 20px; line-height: 24px; }

/* Taskbar */
.taskbar {
  display: flex;
  align-items: center;
  justify-content: space-between;
  height: 60px;
  padding: 0 24px 2px 354px;
  border-top: 1px solid #b5b5b5;
  background: linear-gradient(90deg, #e4e4e3, #dcdddd 30%, #dedede 70%, #e4e3e2);
  color: #1b1b1b;
}

.apps, .tray, .status { display: flex; align-items: center; }
.app { position: relative; flex: none; width: 55px; height: 48px; }

.search {
  display: flex;
  align-items: center;
  gap: 12px;
  width: 274px;
  height: 39px;
  margin: 0 3px 0 5px;
  padding: 0 5px 0 13px;
  border: 1px solid #cfcfcf;
  border-radius: 20px;
  background: #f6f6f6;
}

.search input {
  flex: 1;
  min-width: 0;
  border: 0;
  padding: 0;
  background: none;
  font: 17px/24px "Open Sans", "Noto Sans", sans-serif;
}

.search input::placeholder { color: #5a5a5a; }

.app-open::after, .app-current::after {
  content: "";
  position: absolute;
  bottom: 0;
  left: 50%;
  width: 8px;
  height: 4px;
  margin-left: -4px;
  border-radius: 2px;
  background: #7d7d7d;
}

.app-current { width: 49px; margin: 0 3px; border-radius: 5px; background: #efefef; box-shadow: 0 0 1px #aaa; }
.app-current::after { width: 20px; margin-left: -10px; background: #0078d4; }

.badge {
  position: absolute;
  top: 3px;
  right: 6px;
  width: 20px;
  height: 20px;
  border-radius: 50%;
  background: #0078d4;
  color: #fff;
  font-size: 15px;
  line-height: 20px;
  text-align: center;
}

.tray-btn { width: 40px; height: 40px; }
.lang, .clock { display: flex; flex-direction: column; font-size: 15px; line-height: 20px; }
.lang { width: 56px; align-items: center; }
.status { gap: 10px; margin: 0 20px 0 9px; }
.clock { align-items: flex-end; }
```
